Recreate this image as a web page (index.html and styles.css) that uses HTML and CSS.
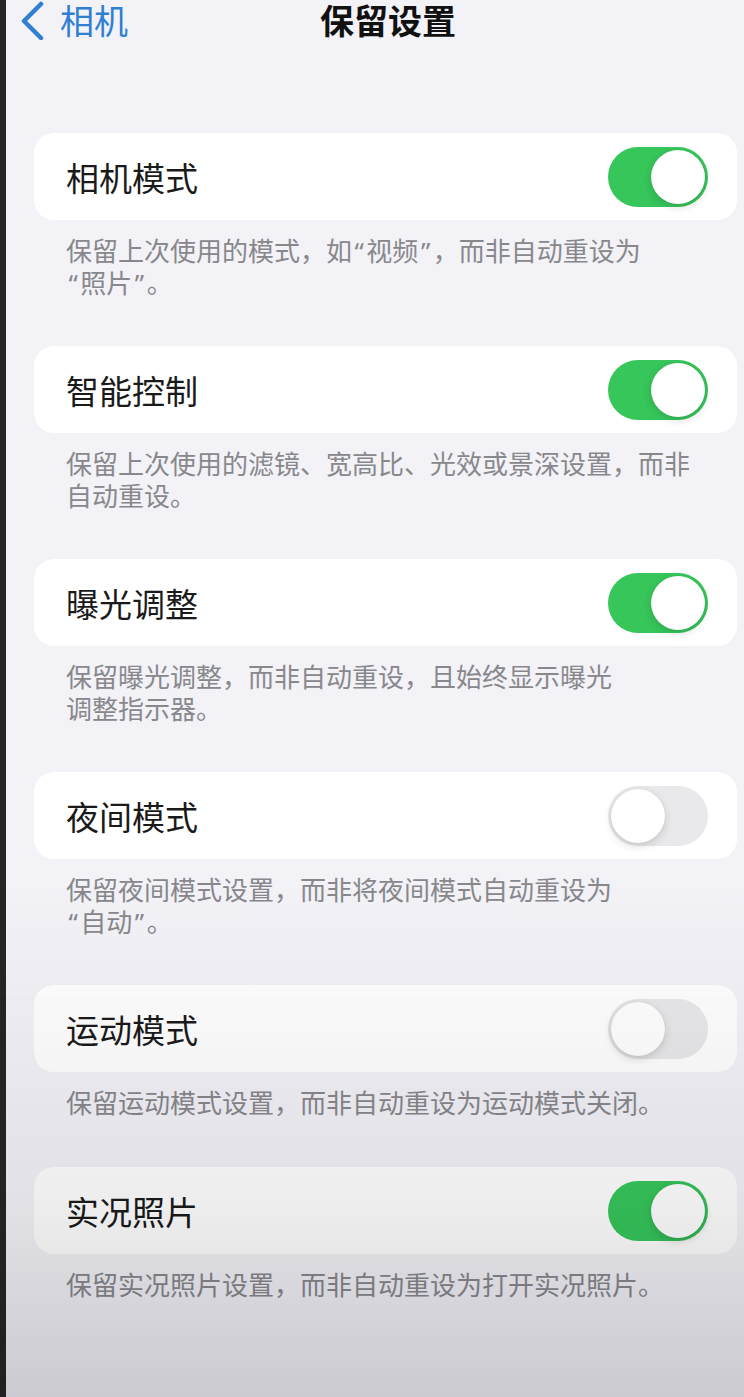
FILE: index.html
```html
<!DOCTYPE html>
<html lang="zh-CN">
<head>
<meta charset="utf-8">
<title>保留设置</title>
<link rel="stylesheet" href="styles.css">
</head>
<body>
<div class="page">
  <header class="nav">
    <div class="back">
      <svg class="chev" width="26" height="40" viewBox="0 0 26 40"><polyline points="21,4 4,21 21,38" fill="none" stroke="#2f7fd3" stroke-width="4.5" stroke-linecap="round" stroke-linejoin="round"/></svg>
      <span class="back-text">相机</span>
    </div>
    <h1 class="title">保留设置</h1>
  </header>

  <main class="list">
    <section class="group">
      <div class="card"><span class="label">相机模式</span><span class="switch on"><span class="knob"></span></span></div>
      <p class="desc">保留上次使用的模式，如<span class="q">“</span>视频<span class="q">”</span>，而非自动重设为<br><span class="q">“</span>照片<span class="q">”</span>。</p>
    </section>
    <section class="group">
      <div class="card"><span class="label">智能控制</span><span class="switch on"><span class="knob"></span></span></div>
      <p class="desc">保留上次使用的滤镜、宽高比、光效或景深设置，而非<br>自动重设。</p>
    </section>
    <section class="group">
      <div class="card"><span class="label">曝光调整</span><span class="switch on"><span class="knob"></span></span></div>
      <p class="desc">保留曝光调整，而非自动重设，且始终显示曝光<br>调整指示器。</p>
    </section>
    <section class="group">
      <div class="card"><span class="label">夜间模式</span><span class="switch off"><span class="knob"></span></span></div>
      <p class="desc">保留夜间模式设置，而非将夜间模式自动重设为<br><span class="q">“</span>自动<span class="q">”</span>。</p>
    </section>
    <section class="group">
      <div class="card"><span class="label">运动模式</span><span class="switch off"><span class="knob"></span></span></div>
      <p class="desc">保留运动模式设置，而非自动重设为运动模式关闭。</p>
    </section>
    <section class="group">
      <div class="card"><span class="label">实况照片</span><span class="switch on"><span class="knob"></span></span></div>
      <p class="desc">保留实况照片设置，而非自动重设为打开实况照片。</p>
    </section>
  </main>
</div>
<div class="shade"></div>
</body>
</html>
```
FILE: styles.css
```css
html, body {
  margin: 0;
  padding: 0;
}
body {
  background: #f2f2f7;
  font-family: "Noto Sans CJK SC", "Noto Sans", sans-serif;
  min-height: 1397px;
  border-left: 6px solid #262626;
  box-sizing: border-box;
  overflow: hidden;
}
.page {
  width: 738px;
}
.nav {
  display: flex;
  align-items: center;
  height: 40px;
}
.back {
  display: flex;
  align-items: center;
  margin-left: 14px;
  color: #2f7fd3;
}
.chev {
  display: block;
}
.back-text {
  font-size: 34px;
  line-height: 40px;
  margin-left: 14px;
}
.title {
  margin: 0 0 0 192px;
  font-size: 34px;
  line-height: 40px;
  font-weight: 700;
  color: #111;
}
.list {
  padding-top: 93px;
}
.group {
  margin: 0 0 48px 0;
}
.group:nth-child(5) {
  margin-bottom: 49px;
}
.card {
  margin-left: 28px;
  margin-right: 7px;
  height: 87px;
  background: #ffffff;
  border-radius: 20px;
  display: flex;
  align-items: center;
  justify-content: space-between;
  padding: 0 29px 0 32px;
  box-sizing: border-box;
}
.label {
  font-size: 33px;
  line-height: 40px;
  color: #1a1a1a;
}
.switch {
  width: 100px;
  height: 60px;
  border-radius: 30px;
  box-sizing: border-box;
  padding: 3px;
  display: flex;
}
.switch.on {
  background: #36c65a;
  justify-content: flex-end;
}
.switch.off {
  background: #e9e9eb;
  justify-content: flex-start;
}
.knob {
  width: 54px;
  height: 54px;
  border-radius: 50%;
  background: #fff;
  box-shadow: 0 3px 8px rgba(0, 0, 0, 0.15), 0 0 1px rgba(0, 0, 0, 0.12);
}
.desc {
  margin: 0;
  padding: 14px 0 0 60px;
  font-size: 26px;
  line-height: 32px;
  color: #88888c;
}
.q {
  font-family: "Noto Sans", "DejaVu Sans", sans-serif;
  line-height: 1;
  padding: 0 2.5px;
}
.shade {
  position: fixed;
  left: 0;
  top: 0;
  width: 100%;
  height: 1397px;
  pointer-events: none;
  background: linear-gradient(to bottom,
    rgba(10, 10, 20, 0) 0%,
    rgba(10, 10, 20, 0) 63%,
    rgba(10, 10, 20, 0.07) 86%,
    rgba(10, 10, 20, 0.17) 100%);
}
```
